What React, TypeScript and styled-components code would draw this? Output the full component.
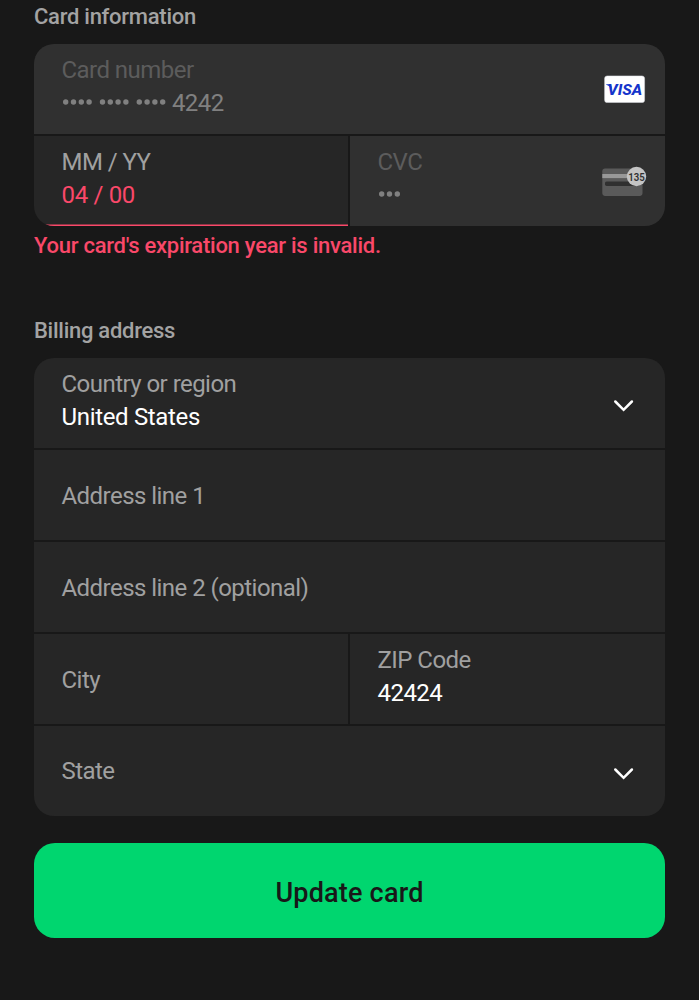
import React from 'react';
import styled, { createGlobalStyle } from 'styled-components';

const GlobalStyle = createGlobalStyle`
  * { box-sizing: border-box; }
  body {
    margin: 0;
    background: #181818;
    font-family: Roboto, sans-serif;
    overflow: hidden;
  }
`;

const Page = styled.main`
  height: 1000px;
  padding: 0 34px;
  display: flex;
  flex-direction: column;
`;

const Heading = styled.h2<{ $gapTop: number }>`
  margin: ${(p) => p.$gapTop}px 0 14px;
  height: 26px;
  font-size: 22px;
  line-height: 26px;
  font-weight: 500;
  color: #a3a3a3;
  letter-spacing: -0.27px;
`;

const Group = styled.section`
  display: grid;
  grid-template-columns: 314px 315px;
  grid-auto-rows: 90px;
  gap: 2px;
  border-radius: 20px;
  overflow: hidden;
`;

const Field = styled.div<{ $wide?: boolean; $disabled?: boolean; $invalid?: boolean }>`
  grid-column: ${(p) => (p.$wide ? '1 / -1' : 'auto')};
  display: flex;
  align-items: center;
  justify-content: space-between;
  padding: 0 19px 0 27.5px;
  background: ${(p) => (p.$disabled ? '#303030' : '#262626')};
  box-shadow: ${(p) => (p.$invalid ? 'inset 0 -1.6px 0 #fa4869' : 'none')};
`;

const FieldText = styled.div<{ $shift?: number }>`
  display: flex;
  flex-direction: column;
  margin-top: ${(p) => p.$shift ?? -6}px;
  font-size: 24px;
  line-height: 32px;
  white-space: pre;
`;

const Label = styled.span<{ $dim?: boolean }>`
  letter-spacing: -0.54px;
  color: ${(p) => (p.$dim ? '#5c5c5c' : '#a0a0a0')};
`;

const Value = styled.span<{ $tone?: 'muted' | 'error'; $tight?: boolean }>`
  margin: 1px 0 -1px;
  letter-spacing: ${(p) => (p.$tight ? -0.55 : -0.33)}px;
  color: ${(p) => (p.$tone === 'muted' ? '#808080' : p.$tone === 'error' ? '#fa4869' : '#ffffff')};
`;

const Dots = styled.svg`
  display: inline-block;
  vertical-align: baseline;
`;

const ErrorText = styled.p`
  margin: 7px 0 0;
  height: 26px;
  font-size: 22px;
  line-height: 26px;
  font-weight: 500;
  letter-spacing: -0.26px;
  color: #fa4869;
`;

const ChevronIcon = styled.svg`
  margin-right: 12px;
  margin-top: 5px;
`;

const CvcSvg = styled.svg`
  margin-right: -4px;
`;

const SubmitButton = styled.button`
  flex: none;
  margin-top: 27px;
  height: 95.4px;
  border: 0;
  border-radius: 21px;
  background: #00d66f;
  color: #181818;
  font: 500 27px/32px Roboto, sans-serif;
  letter-spacing: 0.2px;
  padding: 5px 0 0;
`;

const DOT_STEP = 7.8;
const GROUP_STEP = 36.8;

const MaskDots = ({ groups, count }: { groups: number; count: number }) => (
  <Dots width={groups * GROUP_STEP} height="17" viewBox={`0 0 ${groups * GROUP_STEP} 17`}>
    {Array.from({ length: groups * count }, (_, i) => (
      <circle
        key={i}
        cx={3.7 + Math.floor(i / count) * GROUP_STEP + (i % count) * DOT_STEP}
        cy={8}
        r={2.7}
        fill="#808080"
      />
    ))}
  </Dots>
);

const Chevron = () => (
  <ChevronIcon width="21" height="14" viewBox="0 0 21 14" fill="none">
    <path d="M2.3 2.5 L10.6 10.8 L18.9 2.5" stroke="#fff" strokeWidth="2.5" strokeLinecap="round" strokeLinejoin="miter" />
  </ChevronIcon>
);

const VisaLogo = () => (
  <svg width="42" height="28" viewBox="0 0 42 28">
    <rect x="0.6" y="0.9" width="40" height="26.6" rx="2.6" fill="#fff" stroke="#d9dbe0" strokeWidth="0.5" />
    <text x="3.6" y="20.2" fontFamily="Roboto, sans-serif" fontWeight="800" fontStyle="italic" fontSize="15.4" textLength="34.6" lengthAdjust="spacingAndGlyphs" fill="#1434cb">VISA</text>
    <path d="M2.2 9.2 H6.8 L8.2 14.5 Q6 10.6 2.2 9.7 Z" fill="#1434cb" />
  </svg>
);

const CvcIcon = () => (
  <CvcSvg width="50" height="38" viewBox="0 -4 50 38">
    <rect x="2.3" y="2.4" width="40.2" height="27.5" rx="2.8" fill="#5a5a5a" />
    <rect x="2.3" y="8" width="40.2" height="4.1" fill="#989898" />
    <rect x="5" y="15.5" width="34.5" height="4.4" rx="1.6" fill="#303030" />
    <circle cx="36.5" cy="10.5" r="9.7" fill="#c4c4c4" />
    <text x="36.5" y="14.8" textAnchor="middle" fontFamily="Roboto, sans-serif" fontWeight="600" fontSize="11.8" textLength="16.6" lengthAdjust="spacingAndGlyphs" fill="#303030">135</text>
  </CvcSvg>
);

export default function App() {
  return (
    <Page>
      <GlobalStyle />
      <Heading $gapTop={4}>Card information</Heading>
      <Group>
        <Field $wide $disabled>
          <FieldText>
            <Label $dim>Card number</Label>
            <Value $tone="muted" $tight><MaskDots groups={3} count={4} />4242</Value>
          </FieldText>
          <VisaLogo />
        </Field>
        <Field $invalid>
          <FieldText>
            <Label>MM / YY</Label>
            <Value $tone="error">04 / 00</Value>
          </FieldText>
        </Field>
        <Field $disabled>
          <FieldText>
            <Label $dim>CVC</Label>
            <Value $tone="muted"><MaskDots groups={1} count={3} /></Value>
          </FieldText>
          <CvcIcon />
        </Field>
      </Group>
      <ErrorText>Your card's expiration year is invalid.</ErrorText>
      <Heading $gapTop={59}>Billing address</Heading>
      <Group>
        <Field $wide>
          <FieldText>
            <Label>Country or region</Label>
            <Value>United States</Value>
          </FieldText>
          <Chevron />
        </Field>
        <Field $wide>
          <FieldText $shift={2}><Label>Address line 1</Label></FieldText>
        </Field>
        <Field $wide>
          <FieldText $shift={2}><Label>Address line 2 (optional)</Label></FieldText>
        </Field>
        <Field>
          <FieldText $shift={2}><Label>City</Label></FieldText>
        </Field>
        <Field>
          <FieldText>
            <Label>ZIP Code</Label>
            <Value $tight>42424</Value>
          </FieldText>
        </Field>
        <Field $wide>
          <FieldText $shift={-1}><Label>State</Label></FieldText>
          <Chevron />
        </Field>
      </Group>
      <SubmitButton type="button">Update card</SubmitButton>
    </Page>
  );
}
